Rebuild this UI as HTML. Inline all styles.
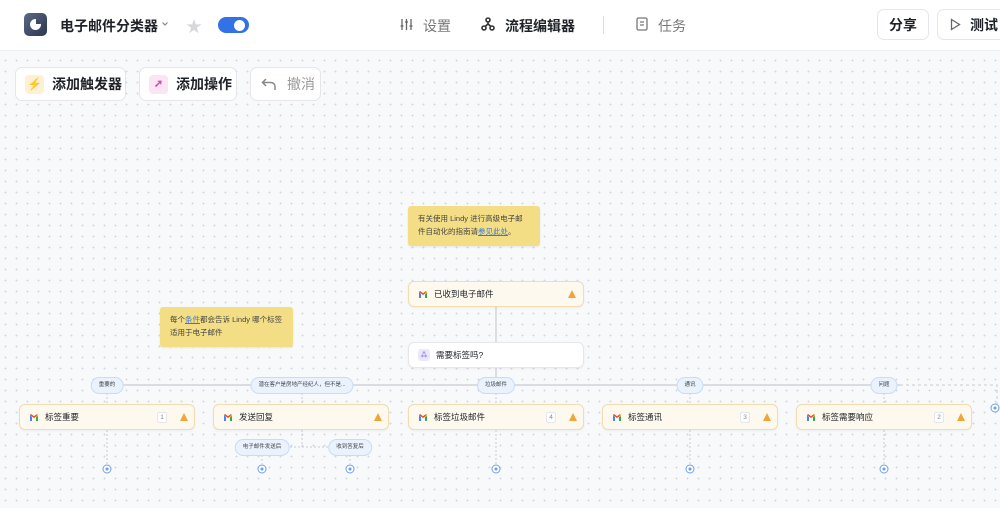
<!DOCTYPE html>
<html><head><meta charset="utf-8"><style>
*{margin:0;padding:0;box-sizing:border-box}
body{width:1000px;height:508px;overflow:hidden;position:relative;font-family:"Liberation Sans","Noto Sans CJK SC",sans-serif;background:#f8f9fb;background-image:radial-gradient(#d5d8de 0.8px,transparent 1px);background-size:11px 11px;color:#1f2328}
.a{position:absolute}
#hdr{left:0;top:0;width:1000px;height:51px;background:#fff;border-bottom:1px solid #eceef1}
.btn{position:absolute;background:#fff;border:1px solid #e4e6ea;border-radius:7px;display:flex;align-items:center;font-size:14px}
.note{position:absolute;background:#f3de86;border-radius:3px;font-size:7.5px;line-height:12.5px;color:#444;padding:7px 10px;box-shadow:0 1px 2px rgba(0,0,0,.08)}
.node{position:absolute;height:26px;background:#fef9ef;border:1px solid #f2dcb0;border-radius:6px;display:flex;align-items:center;font-size:8.5px;padding-left:9px;box-shadow:0 1px 2px rgba(0,0,0,.05)}
.node.w{background:#fff;border-color:#e5e7eb}
.node svg.g{margin-right:6px}
.num{position:absolute;width:10px;height:11px;border:1px solid #e5e7eb;background:#fff;border-radius:2px;font-size:6.5px;color:#888;text-align:center;line-height:9px;font-style:normal}
.warn{position:absolute;width:0;height:0;border-left:4.5px solid transparent;border-right:4.5px solid transparent;border-bottom:8px solid #f0a43a}
.pill{position:absolute;height:17px;background:#eaf2fd;border:1px solid #c9dcf5;border-radius:9px;font-size:5.5px;color:#444;text-align:center;line-height:15px;padding:0 7px;transform:translateX(-50%);white-space:nowrap}
.plus{position:absolute;width:9px;height:9px;border:1.3px solid #6fa0e6;border-radius:50%;background:#fff;transform:translate(-50%,-50%)}
.plus:after{content:"";position:absolute;left:2px;top:2px;width:2.5px;height:2.5px;background:#6fa0e6;border-radius:50%}
</style></head><body>
<svg width="0" height="0" style="position:absolute"><defs><g id="gm"><path d="M1 2v6h2V4z" fill="#4285f4"/><path d="M9 2v6H7V4z" fill="#34a853"/><path d="M1 2l4 3 4-3-1-1-3 2.2L2 1z" fill="#ea4335"/><path d="M8 1l1 1V3L7 4.5z" fill="#fbbc04"/></g></defs></svg>
<div id="hdr" class="a"></div>
<div class="a" style="left:24px;top:13px;width:23px;height:23px;border-radius:5px;background:linear-gradient(135deg,#5d6885,#2c3650)"></div>
<div class="a" style="left:30px;top:19px;width:11px;height:11px;border-radius:50%;background:#fff"></div>
<div class="a" style="left:36px;top:19px;width:5px;height:5px;background:#3e4862;border-radius:0 5px 0 0"></div>
<div class="a" style="left:60px;top:16px;font-size:14px;font-weight:bold">电子邮件分类器</div>
<svg class="a" style="left:161px;top:21px" width="8" height="6" viewBox="0 0 8 6" fill="none" stroke="#888" stroke-width="1.2"><path d="M1.5 1.5L4 4l2.5-2.5"/></svg>
<div class="a" style="left:186px;top:13px;font-size:16px;color:#d6d8dc">★</div>
<div class="a" style="left:218px;top:17px;width:31px;height:16px;border-radius:8px;background:#3272e6"></div>
<div class="a" style="left:234px;top:19.5px;width:11px;height:11px;border-radius:50%;background:#fff"></div>
<svg class="a" style="left:400px;top:18px" width="13" height="13" viewBox="0 0 13 13" fill="none" stroke="#666" stroke-width="1.3"><path d="M2 1v11M6.5 1v11M11 1v11M0.5 8h3M5 4h3M9.5 8h3"/></svg>
<div class="a" style="left:423px;top:16px;font-size:14px;color:#777">设置</div>
<svg class="a" style="left:481px;top:17px" width="14" height="14" viewBox="0 0 14 14" fill="none" stroke="#333" stroke-width="1.6"><circle cx="7" cy="3" r="2"/><circle cx="3" cy="11" r="2"/><circle cx="11" cy="11" r="2"/><path d="M7 5v2M7 7L4 9.5M7 7l3 2.5"/></svg>
<div class="a" style="left:505px;top:16px;font-size:14px;font-weight:bold">流程编辑器</div>
<div class="a" style="left:603px;top:16px;width:1px;height:18px;background:#ddd"></div>
<svg class="a" style="left:636px;top:17px" width="12" height="14" viewBox="0 0 12 14" fill="none" stroke="#777" stroke-width="1.3"><rect x="1" y="1" width="10" height="12" rx="1.5"/><path d="M4 5h4M4 8h4"/></svg>
<div class="a" style="left:658px;top:16px;font-size:14px;color:#777">任务</div>
<div class="btn" style="left:877px;top:9px;width:52px;height:31px;justify-content:center;font-weight:bold">分享</div>
<div class="btn" style="left:937px;top:9px;width:70px;height:31px;padding-left:12px;font-weight:bold">
<svg width="11" height="13" viewBox="0 0 11 13" fill="none" stroke="#666" stroke-width="1.3"><path d="M1.5 1.5v10l8-5z"/></svg><span style="margin-left:9px">测试</span></div>
<div class="btn" style="left:15px;top:67px;width:111px;height:34px;padding-left:9px;font-weight:bold">
<span style="width:19px;height:19px;background:#fdf0d4;border-radius:4px;color:#f0a030;font-size:12px;text-align:center;line-height:19px">⚡</span><span style="margin-left:8px">添加触发器</span></div>
<div class="btn" style="left:139px;top:67px;width:98px;height:34px;padding-left:9px;font-weight:bold">
<span style="width:19px;height:19px;background:#fbe5f3;border-radius:4px;color:#d04aa8;font-size:11px;text-align:center;line-height:19px">➚</span><span style="margin-left:8px">添加操作</span></div>
<div class="btn" style="left:250px;top:67px;width:71px;height:34px;padding-left:10px;color:#999">
<svg width="16" height="14" viewBox="0 0 16 14" fill="none" stroke="#888" stroke-width="1.5"><path d="M5 2L1.5 5.5 5 9M2 5.5h8a4 4 0 0 1 4 4V13"/></svg><span style="margin-left:10px">撤消</span></div>

<svg class="a" style="left:0;top:0" width="1000" height="508" fill="none">
<g stroke="#c9ccd3" stroke-width="1.2">
<path d="M496 306v36M496 368v17M107 385H900"/>
</g>
<path d="M900 385H997v20" stroke="#c9ccd3" stroke-dasharray="3 3"/>
<g stroke="#c9ccd3" stroke-dasharray="2 2">
<path d="M107 393v10M302 393v10M496 393v10M690 393v10M884 393v10"/>
<path d="M107 430v34M496 430v34M690 430v34M884 430v34M302 430v17M286 447h48M262 455v9M350 455v9"/>
</g>
</svg>

<div class="note" style="left:408px;top:206px;width:132px;height:40px">有关使用 Lindy 进行高级电子邮件自动化的指南请<span style="color:#3a78d8;text-decoration:underline">参见此处</span>。</div>
<div class="note" style="left:160px;top:307px;width:133px;height:40px">每个<span style="color:#3a78d8;text-decoration:underline">条件</span>都会告诉 Lindy 哪个标签适用于电子邮件</div>

<div class="node" style="left:408px;top:281px;width:176px"><svg class="g" width="10" height="9" viewBox="0 0 10 9"><use href="#gm"/></svg>已收到电子邮件<i class="warn" style="left:159px;top:8px"></i></div>
<div class="node w" style="left:408px;top:342px;width:176px"><span style="width:12px;height:12px;background:#ece8fb;border-radius:3px;color:#6b4fd8;font-size:8px;text-align:center;line-height:12px;margin-right:6px">⁂</span>需要标签吗?</div>

<div class="pill" style="left:107px;top:377px">重要的</div>
<div class="pill" style="left:302px;top:377px">潜在客户是房地产经纪人，但不是...</div>
<div class="pill" style="left:496px;top:377px">垃圾邮件</div>
<div class="pill" style="left:690px;top:377px">通讯</div>
<div class="pill" style="left:884px;top:377px">问题</div>

<div class="node" style="left:19px;top:404px;width:176px"><svg class="g" width="10" height="9" viewBox="0 0 10 9"><use href="#gm"/></svg>标签重要<i class="num" style="left:137px;top:7px">1</i><i class="warn" style="left:160px;top:8px"></i></div>
<div class="node" style="left:213px;top:404px;width:176px"><svg class="g" width="10" height="9" viewBox="0 0 10 9"><use href="#gm"/></svg>发送回复<i class="warn" style="left:160px;top:8px"></i></div>
<div class="node" style="left:408px;top:404px;width:176px"><svg class="g" width="10" height="9" viewBox="0 0 10 9"><use href="#gm"/></svg>标签垃圾邮件<i class="num" style="left:137px;top:7px">4</i><i class="warn" style="left:160px;top:8px"></i></div>
<div class="node" style="left:602px;top:404px;width:176px"><svg class="g" width="10" height="9" viewBox="0 0 10 9"><use href="#gm"/></svg>标签通讯<i class="num" style="left:137px;top:7px">3</i><i class="warn" style="left:160px;top:8px"></i></div>
<div class="node" style="left:796px;top:404px;width:176px"><svg class="g" width="10" height="9" viewBox="0 0 10 9"><use href="#gm"/></svg>标签需要响应<i class="num" style="left:137px;top:7px">2</i><i class="warn" style="left:160px;top:8px"></i></div>

<div class="pill" style="left:262px;top:439px">电子邮件发送后</div>
<div class="pill" style="left:350px;top:439px">收到答复后</div>

<div class="plus" style="left:107px;top:469px"></div>
<div class="plus" style="left:262px;top:469px"></div>
<div class="plus" style="left:350px;top:469px"></div>
<div class="plus" style="left:496px;top:469px"></div>
<div class="plus" style="left:690px;top:469px"></div>
<div class="plus" style="left:884px;top:469px"></div>
<div class="plus" style="left:995px;top:408px"></div>
</body></html>
